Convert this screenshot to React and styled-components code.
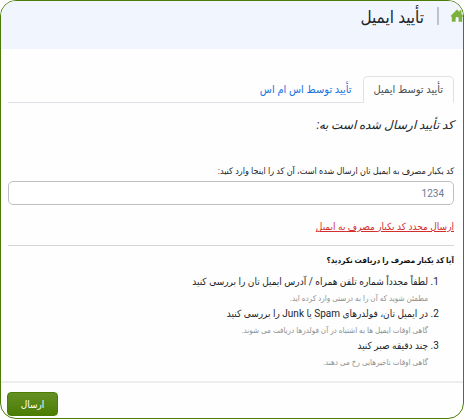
import React, { useState } from 'react';
import styled, { createGlobalStyle } from 'styled-components';

const GlobalStyle = createGlobalStyle`
  * {
    box-sizing: border-box;
  }

  body {
    margin: 0;
    background: white;
    color: #212529;
    font-family: Roboto, 'DejaVu Sans Condensed', 'DejaVu Sans', sans-serif;
    font-size: 10px;
  }
`;

const Page = styled.div`
  display: flex;
  flex-direction: column;
  min-height: 100vh;
  overflow: hidden;
  background: #fefefe;
  border: 1px solid #4b7d05;
  border-radius: 16px;
`;

const Header = styled.header`
  display: flex;
  align-items: flex-start;
  height: 48px;
  padding-top: 6px;
  background: #f0f5fe;
`;

const HomeLink = styled.a`
  display: flex;
  padding-top: 2px;
  color: #7cb13f;
`;

const Divider = styled.span`
  width: 2px;
  height: 18px;
  margin: 0 12px 0 13px;
  background: #bfc3cc;
`;

const Title = styled.h1`
  margin: 0;
  font-size: 17px;
  font-weight: 400;
  line-height: 20px;
`;

const Content = styled.main`
  flex: 1;
  padding: 27px 9px 9px 7px;
`;

const Tabs = styled.div`
  display: flex;
  border-bottom: 1px solid #dee2e6;
`;

const Tab = styled.button`
  height: 27px;
  margin-bottom: -1px;
  padding: 0 10px;
  border: 1px solid ${(props) => (props.$active ? '#dee2e6' : 'transparent')};
  border-bottom-color: ${(props) => (props.$active ? '#fefefe' : 'transparent')};
  border-radius: 5px 5px 0 0;
  background: transparent;
  color: ${(props) => (props.$active ? '#495057' : '#1a73e0')};
  font-family: inherit;
  font-size: 11px;
  cursor: pointer;
`;

const SentTo = styled.p`
  margin: 12px 0 0;
  font-size: 12px;
  font-style: italic;
  line-height: 20px;
`;

const Label = styled.label`
  display: block;
  margin-top: 28px;
  font-size: 9px;
  line-height: 16px;
`;

const CodeInput = styled.input`
  display: block;
  width: 100%;
  height: 24px;
  margin-top: 2px;
  padding: 0 9px;
  border: 1px solid #bfbfbf;
  border-radius: 5px;
  background: white;
  color: #212529;
  font-family: inherit;
  font-size: 10px;

  &::placeholder {
    color: #6c7a94;
    opacity: 1;
  }
`;

const ResendLink = styled.a`
  display: table;
  margin-top: 14px;
  color: #d32f2f;
  font-size: 10px;
  line-height: 16px;
`;

const Help = styled.section`
  margin-top: 10px;
  padding-top: 7px;
  border-top: 1px solid #d6d6d6;
`;

const Question = styled.h2`
  margin: 0;
  color: #111111;
  font-size: 8px;
  font-weight: 700;
  line-height: 16px;
`;

const Steps = styled.ol`
  margin: 4px 0 0;
  padding: 0 26px 0 0;
`;

const Step = styled.li`
  font-size: 10px;
  line-height: 17px;
`;

const Hint = styled.div`
  padding-top: 3px;
  color: #8f8f8f;
  font-size: 8px;
  line-height: 12px;
`;

const Footer = styled.footer`
  display: flex;
  justify-content: flex-end;
  padding: 9px 6px 2px;
  border-top: 2px solid #eeeeee;
`;

const SubmitButton = styled.button`
  min-width: 51px;
  height: 24px;
  border: 1px solid #4b7d05;
  border-radius: 4px;
  background: linear-gradient(#659024, #4b7d05);
  color: white;
  font-family: inherit;
  font-size: 10px;
  cursor: pointer;
`;

const tabs = [
  { id: 'email', label: 'تأیید توسط ایمیل' },
  { id: 'sms', label: 'تأیید توسط اس ام اس' },
];

const steps = [
  {
    text: 'لطفاً مجدداً شماره تلفن همراه / آدرس ایمیل تان را بررسی کنید',
    hint: 'مطمئن شوید که آن را به درستی وارد کرده اید.',
  },
  {
    text: 'در ایمیل تان، فولدرهای Spam یا Junk را بررسی کنید',
    hint: 'گاهی اوقات ایمیل ها به اشتباه در آن فولدرها دریافت می شوند.',
  },
  {
    text: 'چند دقیقه صبر کنید',
    hint: 'گاهی اوقات تاخیرهایی رخ می دهند.',
  },
];

function HomeIcon() {
  return (
    <svg width="12" height="13" viewBox="0 0 12 13" fill="currentColor" aria-hidden="true">
      <path d="M6 0.5 8.6 3V1.2h1.8v3.5L12 6.6v1.2h-.8V12.8H7.6V9.2Q7.6 8 6.1 8T4.6 9.2v3.6H.8V7.8H0V6.6Z" />
    </svg>
  );
}

function App() {
  const [activeTab, setActiveTab] = useState('email');
  const [code, setCode] = useState('');

  return (
    <>
      <GlobalStyle />
      <Page dir="rtl" lang="fa">
        <Header>
          <HomeLink href="#home">
            <HomeIcon />
          </HomeLink>
          <Divider />
          <Title>تأیید ایمیل</Title>
        </Header>
        <Content>
          <Tabs role="tablist">
            {tabs.map((tab) => (
              <Tab
                key={tab.id}
                type="button"
                role="tab"
                aria-selected={activeTab === tab.id}
                $active={activeTab === tab.id}
                onClick={() => setActiveTab(tab.id)}
              >
                {tab.label}
              </Tab>
            ))}
          </Tabs>
          <SentTo>کد تأیید ارسال شده است به:</SentTo>
          <form id="verify" onSubmit={(e) => e.preventDefault()}>
            <Label htmlFor="code">
              کد یکبار مصرف به ایمیل تان ارسال شده است، آن کد را اینجا وارد کنید:
            </Label>
            <CodeInput
              id="code"
              type="text"
              inputMode="numeric"
              placeholder="1234"
              value={code}
              onChange={(e) => setCode(e.target.value)}
            />
          </form>
          <ResendLink href="#resend">ارسال مجدد کد یکبار مصرف به ایمیل</ResendLink>
          <Help>
            <Question>آیا کد یکبار مصرف را دریافت نکردید؟</Question>
            <Steps>
              {steps.map((step) => (
                <Step key={step.text}>
                  {step.text}
                  <Hint>{step.hint}</Hint>
                </Step>
              ))}
            </Steps>
          </Help>
        </Content>
        <Footer>
          <SubmitButton type="submit" form="verify">
            ارسال
          </SubmitButton>
        </Footer>
      </Page>
    </>
  );
}

export default App;
